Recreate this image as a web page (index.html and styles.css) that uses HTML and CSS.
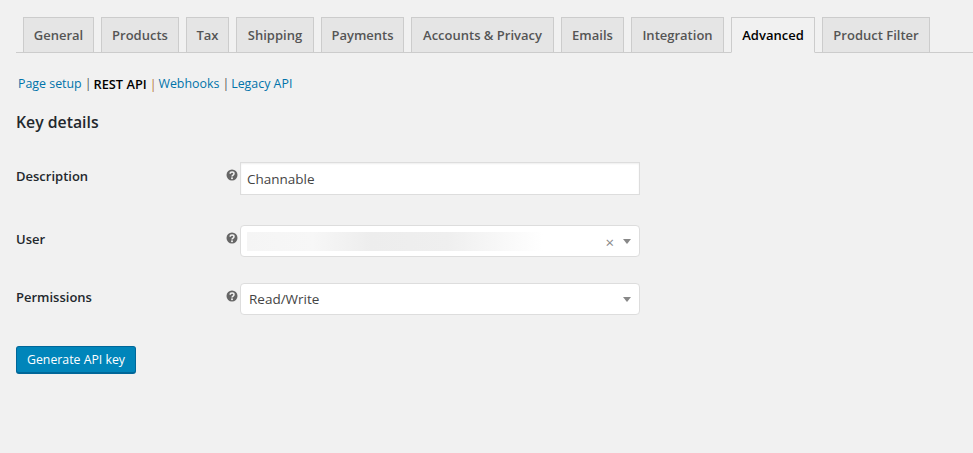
FILE: index.html
```html
<!DOCTYPE html>
<html lang="en">
<head>
<meta charset="utf-8">
<title>Advanced settings</title>
<link rel="stylesheet" href="styles.css">
</head>
<body>
<nav class="tabs">
  <a class="tab w-general">General</a>
  <a class="tab w-products">Products</a>
  <a class="tab w-tax">Tax</a>
  <a class="tab w-shipping">Shipping</a>
  <a class="tab w-payments">Payments</a>
  <a class="tab w-accounts">Accounts &amp; Privacy</a>
  <a class="tab w-emails">Emails</a>
  <a class="tab w-integration">Integration</a>
  <a class="tab tab-active w-advanced">Advanced</a>
  <a class="tab w-filter">Product Filter</a>
</nav>
<ul class="subnav">
  <li><a class="link">Page setup</a><span class="sep">|</span></li>
  <li><strong class="current">REST API</strong><span class="sep sep-wide">|</span></li>
  <li><a class="link">Webhooks</a><span class="sep">|</span></li>
  <li><a class="link">Legacy API</a></li>
</ul>
<h2 class="title">Key details</h2>
<div class="form">
  <div class="row row-desc">
    <label class="label">Description</label>
    <span class="help"><svg viewBox="0 0 12 12" width="12" height="12"><circle cx="6" cy="6" r="5.5" fill="#666"/><path class="help-q" d="M4.2 4.7c0-2.2 3.8-2.2 3.8 0 0 1.3-2 1.4-2 2.8"/><circle cx="6" cy="9.3" r="1" fill="#f1f1f1"/></svg></span>
    <div class="field field-input">Channable</div>
  </div>
  <div class="row row-user">
    <label class="label">User</label>
    <span class="help"><svg viewBox="0 0 12 12" width="12" height="12"><circle cx="6" cy="6" r="5.5" fill="#666"/><path class="help-q" d="M4.2 4.7c0-2.2 3.8-2.2 3.8 0 0 1.3-2 1.4-2 2.8"/><circle cx="6" cy="9.3" r="1" fill="#f1f1f1"/></svg></span>
    <div class="field field-select">
      <div class="blur"></div>
      <span class="clear">×</span>
      <span class="arrow"></span>
    </div>
  </div>
  <div class="row row-perm">
    <label class="label">Permissions</label>
    <span class="help"><svg viewBox="0 0 12 12" width="12" height="12"><circle cx="6" cy="6" r="5.5" fill="#666"/><path class="help-q" d="M4.2 4.7c0-2.2 3.8-2.2 3.8 0 0 1.3-2 1.4-2 2.8"/><circle cx="6" cy="9.3" r="1" fill="#f1f1f1"/></svg></span>
    <div class="field field-select">
      <span class="value">Read/Write</span>
      <span class="arrow"></span>
    </div>
  </div>
</div>
<button class="btn" type="button">Generate API key</button>
</body>
</html>
```
FILE: styles.css
```css
* { box-sizing: border-box; }
html, body { margin: 0; height: 100%; overflow: hidden; }
body {
  background: #f1f1f1;
  color: #23282d;
  font-family: "Open Sans", "Noto Sans", sans-serif;
  font-size: 13px;
  padding: 17px 0 0 16px;
}
.tabs {
  display: flex;
  gap: 7px;
  height: 36px;
  padding-left: 7px;
  border-bottom: 1px solid #ccc;
}
.tab {
  height: 36px;
  border: 1px solid #ccc;
  background: #e5e5e5;
  color: #555;
  font-size: 13px;
  font-weight: 600;
  line-height: 34px;
  text-align: center;
  white-space: nowrap;
}
.tab-active { background: #f1f1f1; border-bottom-color: #f1f1f1; color: #000; }
.w-general { width: 71px; }
.w-products { width: 78px; }
.w-tax { width: 43px; }
.w-shipping { width: 78px; }
.w-payments { width: 83px; }
.w-accounts { width: 143px; }
.w-emails { width: 63px; }
.w-integration { width: 93px; }
.w-advanced { width: 84px; }
.w-filter { width: 108px; }
.subnav {
  display: flex;
  list-style: none;
  margin: 22px 0 0 2px;
  padding: 0;
  height: 18px;
  line-height: 18px;
  font-size: 12.4px;
}
.link { color: #0073aa; }
.current { color: #000; font-weight: 600; font-size: 12.8px; }
.sep { color: #555; margin: 0 2px 0 3px; }
.sep-wide { color: #b5783c; }
.title {
  margin: 19px 0 0;
  font-size: 15.8px;
  font-weight: 600;
  line-height: 20px;
  color: #23282d;
}
.form { margin-top: 30px; }
.row { display: flex; align-items: flex-start; width: 624px; }
.row-user { margin-top: 30px; }
.row-perm { margin-top: 26px; }
.label {
  width: 210px;
  font-weight: 600;
  font-size: 13px;
  line-height: 18px;
  padding-top: 5px;
  color: #23282d;
}
.help { width: 14px; height: 12px; margin-top: 7px; display: block; }
.help svg { display: block; }
.help-q { fill: none; stroke: #f1f1f1; stroke-width: 1.5; }
.field {
  width: 400px;
  background: #fff;
  border: 1px solid #ddd;
  font-size: 13.5px;
  color: #444;
  display: flex;
  align-items: center;
  position: relative;
}
.field-input { height: 33px; padding-left: 6px; box-shadow: inset 0 1px 2px rgba(0,0,0,.07); }
.field-select { height: 32px; border-radius: 4px; padding-left: 8px; }
.blur {
  width: 296px;
  height: 19px;
  margin-left: -2px;
  background: linear-gradient(90deg, #f5f5f5 0, #f7f7f7 22%, #ededed 42%, #efefef 68%, #f8f8f8 86%, #fff 100%);
}
.clear { position: absolute; right: 25px; top: 7px; color: #888; font-size: 15px; line-height: 18px; }
.arrow {
  position: absolute;
  right: 8px;
  top: 13px;
  border: 4px solid transparent;
  border-top: 5px solid #888;
  border-bottom: 0;
}
.btn {
  display: block;
  margin-top: 31px;
  width: 120px;
  height: 28px;
  padding: 0;
  background: #0085ba;
  border: 1px solid #006799;
  border-bottom-width: 2px;
  border-radius: 3px;
  color: #fff;
  font-family: inherit;
  font-size: 12.3px;
  line-height: 24px;
  text-align: center;
}
```
